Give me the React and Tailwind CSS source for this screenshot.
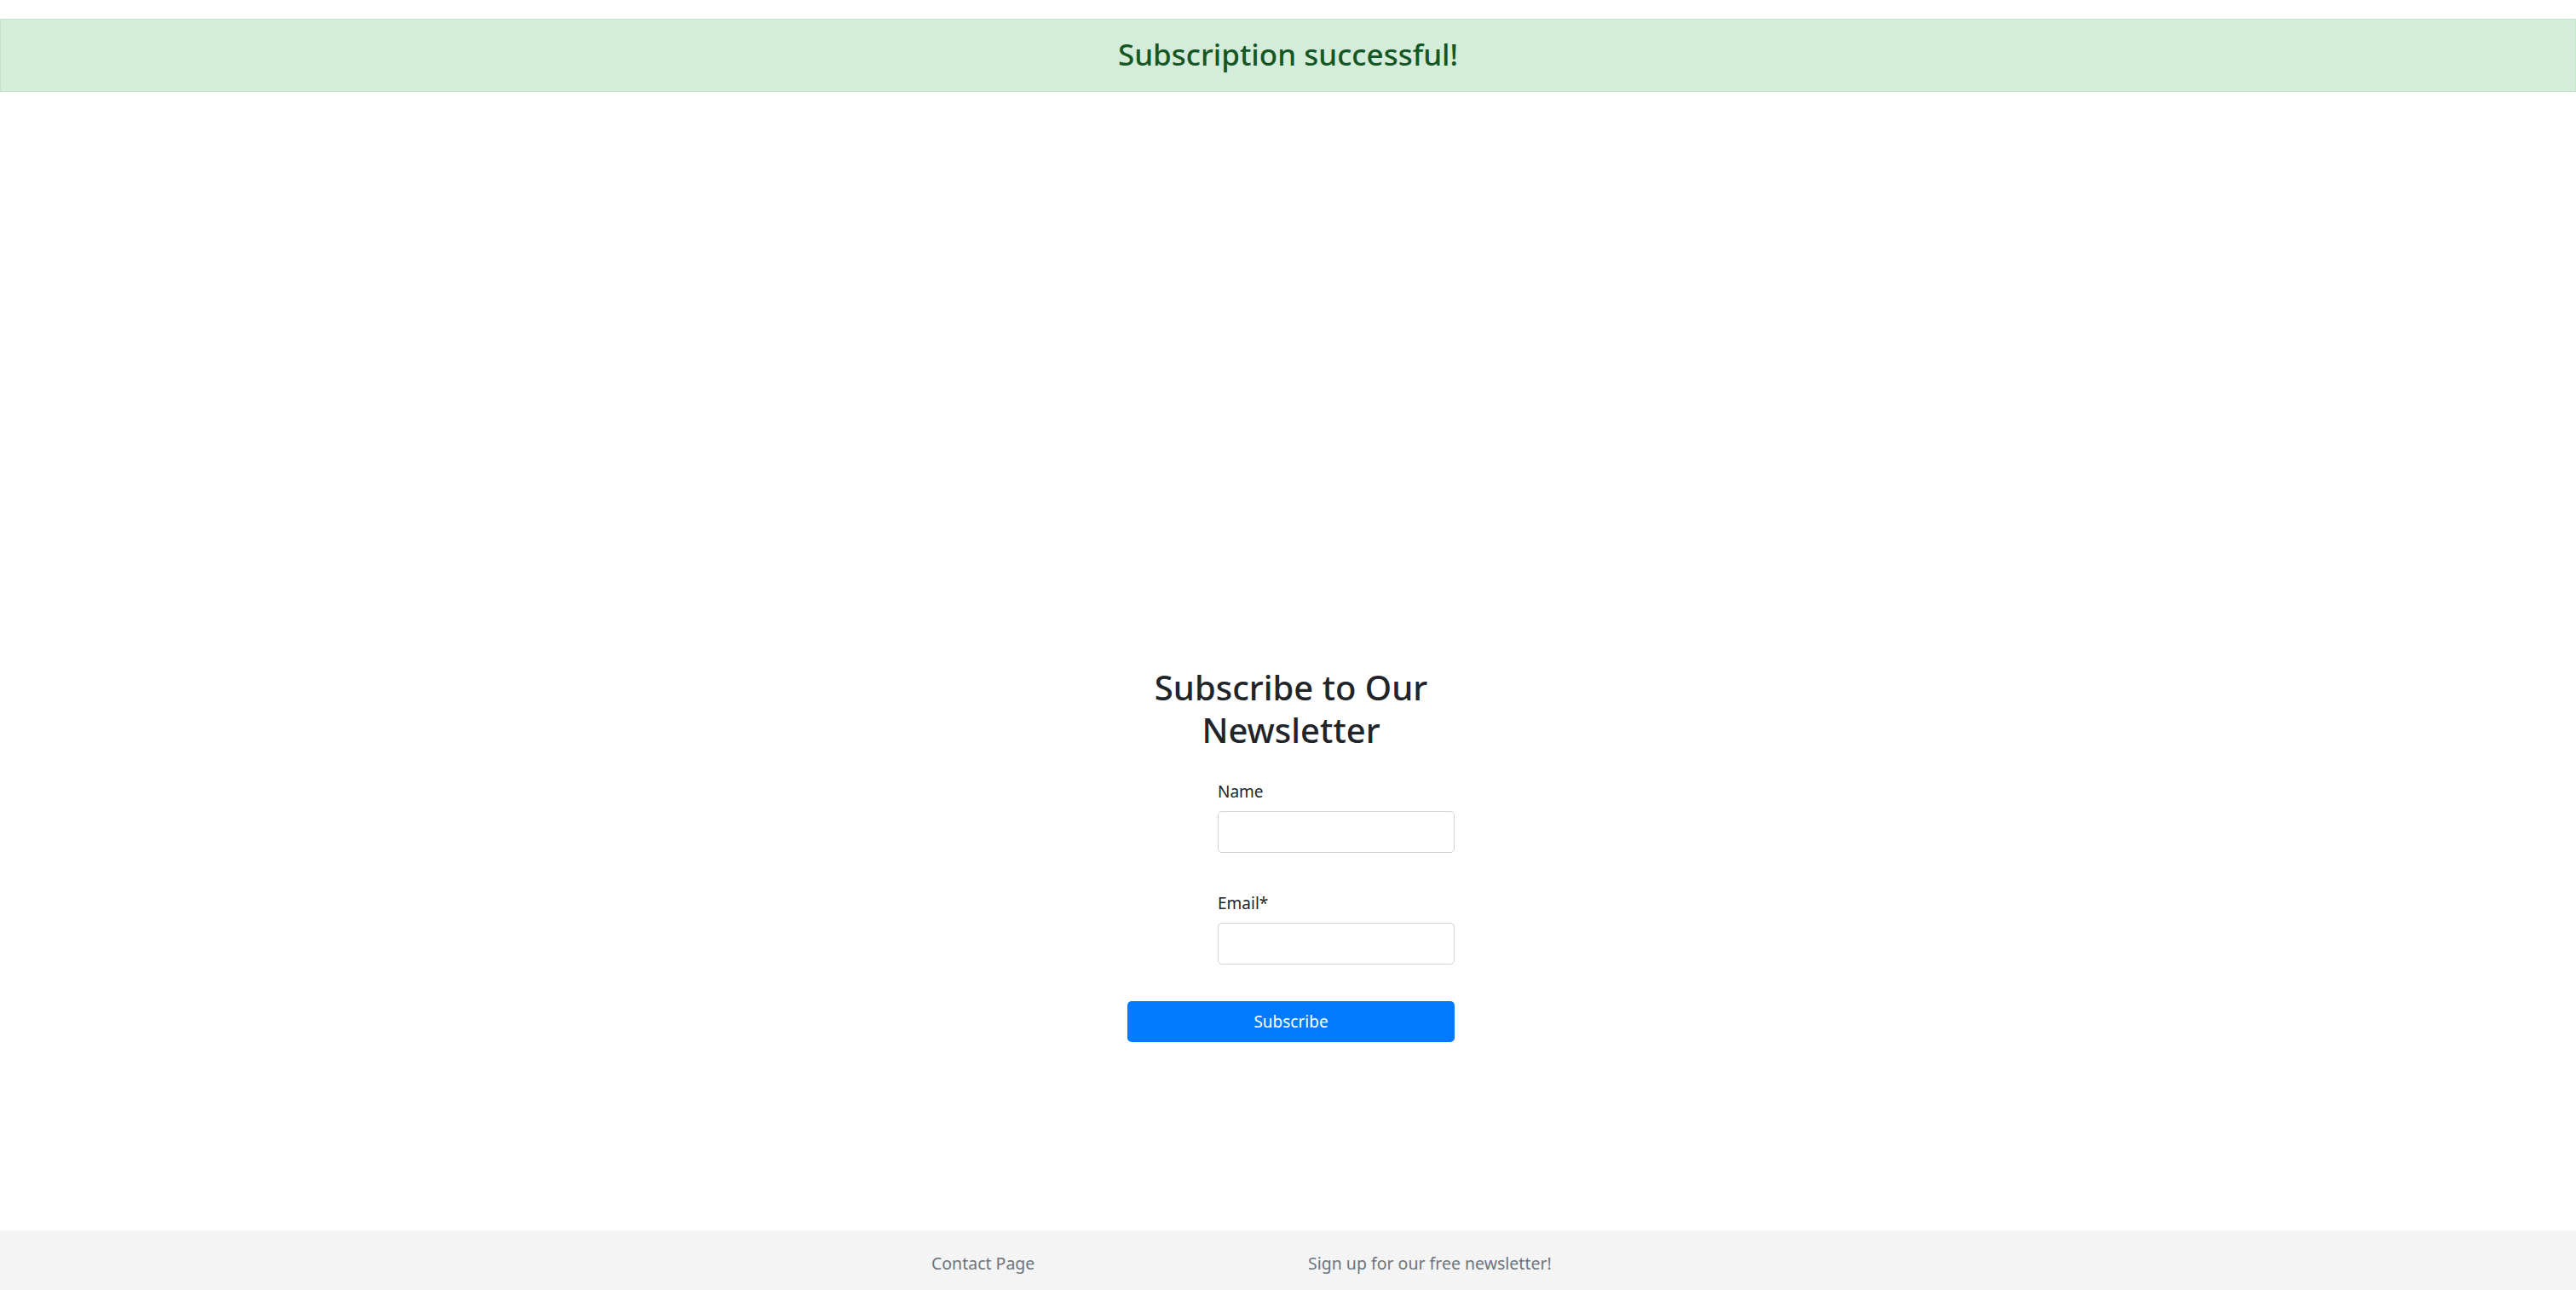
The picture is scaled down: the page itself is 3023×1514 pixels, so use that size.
export default function App() {
  return (
    <div className="min-h-screen flex flex-col bg-white" style={{ fontFamily: '"Noto Sans", "Open Sans", sans-serif' }}>
      <div className="pt-[22px]">
        <div className="h-[86px] border border-[#c3e6cb] bg-[#d4edda] flex items-center justify-center">
          <span className="text-[35px] leading-[48px] font-medium text-[#155724] -mt-[3px]">Subscription successful!</span>
        </div>
      </div>
      <main className="flex-1 pt-[674px]">
        <div className="w-[391px] mx-auto pl-[7px]">
          <h2 className="text-center text-[40px] leading-[50px] font-medium text-[#212529]">
            Subscribe to Our<br />Newsletter
          </h2>
          <div className="mt-[32px] pl-[106px]">
            <label className="block text-[19px] leading-[30px] text-[#212529]">Name</label>
            <input type="text" className="mt-[8px] block w-[278px] h-[49px] rounded-[5px] border border-[#ced4da] bg-white" />
          </div>
          <div className="mt-[44px] pl-[106px]">
            <label className="block text-[19px] leading-[30px] text-[#212529]">Email*</label>
            <input type="email" className="mt-[8px] block w-[278px] h-[49px] rounded-[5px] border border-[#ced4da] bg-white" />
          </div>
          <button className="mt-[43px] w-[384px] h-[48px] rounded-[5px] bg-[#007bff] text-white text-[19px]">Subscribe</button>
        </div>
      </main>
      <footer className="h-[70px] bg-[#f4f4f4] flex items-center pt-[7px] pl-[1093px] text-[19.5px] text-[#6c757d]">
        <span className="w-[442px]">Contact Page</span>
        <span>Sign up for our free newsletter!</span>
      </footer>
    </div>
  );
}
